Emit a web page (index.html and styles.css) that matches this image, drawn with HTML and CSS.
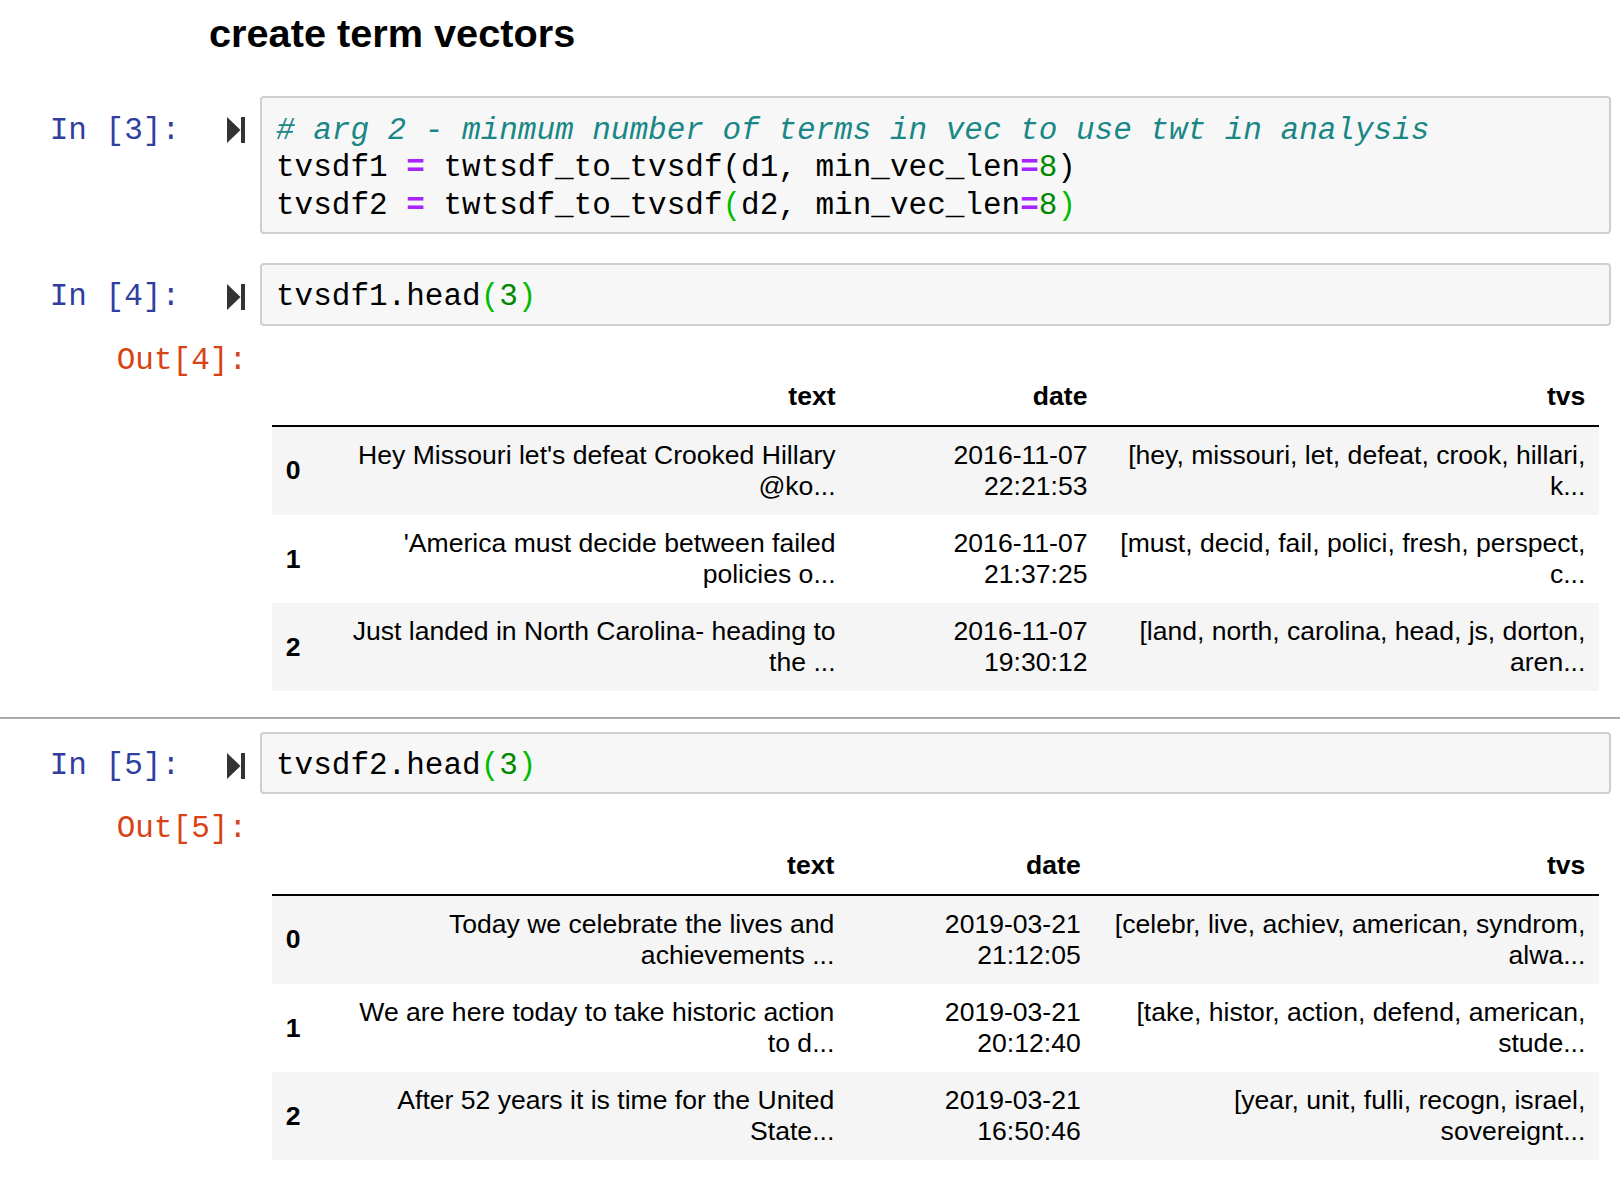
FILE: index.html
```html
<!DOCTYPE html>
<html>
<head>
<meta charset="utf-8">
<title>create term vectors</title>
<link rel="stylesheet" href="styles.css">
</head>
<body>
<div class="notebook">
  <div class="md-cell">
    <h2 class="md-title">create term vectors</h2>
  </div>

  <div class="cell cell-first">
    <div class="in-prompt">
      <span class="prompt-text in-color">In&nbsp;[3]:</span>
      <svg class="run-icon" viewBox="0 0 18 26" width="18" height="26" aria-hidden="true"><polygon points="0,0 13.5,13 0,26" fill="#333"/><rect x="14" y="0" width="4" height="26" fill="#333"/></svg>
    </div>
    <div class="input-box"><pre class="code"><span class="cm"># arg 2 - minmum number of terms in vec to use twt in analysis</span>
tvsdf1 <span class="op">=</span> twtsdf_to_tvsdf(d1, min_vec_len<span class="op">=</span><span class="num">8</span>)
tvsdf2 <span class="op">=</span> twtsdf_to_tvsdf<span class="br">(</span>d2, min_vec_len<span class="op">=</span><span class="num">8</span><span class="br">)</span></pre></div>
  </div>

  <div class="cell cell-next">
    <div class="in-prompt">
      <span class="prompt-text in-color">In&nbsp;[4]:</span>
      <svg class="run-icon" viewBox="0 0 18 26" width="18" height="26" aria-hidden="true"><polygon points="0,0 13.5,13 0,26" fill="#333"/><rect x="14" y="0" width="4" height="26" fill="#333"/></svg>
    </div>
    <div class="input-box"><pre class="code">tvsdf1.head<span class="br">(</span><span class="num">3</span><span class="br">)</span></pre></div>
  </div>
  <div class="output">
    <div class="out-prompt"><span class="prompt-text out-color">Out[4]:</span></div>
    <div class="output-sub">
      <table class="dataframe">
        <thead>
          <tr><th></th><th>text</th><th>date</th><th>tvs</th></tr>
        </thead>
        <tbody>
          <tr><th>0</th><td>Hey Missouri let's defeat Crooked Hillary @ko...</td><td>2016-11-07 22:21:53</td><td>[hey, missouri, let, defeat, crook, hillari, k...</td></tr>
          <tr><th>1</th><td>'America must decide between failed policies o...</td><td>2016-11-07 21:37:25</td><td>[must, decid, fail, polici, fresh, perspect, c...</td></tr>
          <tr><th>2</th><td>Just landed in North Carolina- heading to the ...</td><td>2016-11-07 19:30:12</td><td>[land, north, carolina, head, js, dorton, aren...</td></tr>
        </tbody>
      </table>
    </div>
  </div>

  <hr class="separator">

  <div class="cell cell-after-sep">
    <div class="in-prompt">
      <span class="prompt-text in-color">In&nbsp;[5]:</span>
      <svg class="run-icon" viewBox="0 0 18 26" width="18" height="26" aria-hidden="true"><polygon points="0,0 13.5,13 0,26" fill="#333"/><rect x="14" y="0" width="4" height="26" fill="#333"/></svg>
    </div>
    <div class="input-box"><pre class="code">tvsdf2.head<span class="br">(</span><span class="num">3</span><span class="br">)</span></pre></div>
  </div>
  <div class="output">
    <div class="out-prompt"><span class="prompt-text out-color">Out[5]:</span></div>
    <div class="output-sub">
      <table class="dataframe">
        <thead>
          <tr><th></th><th>text</th><th>date</th><th>tvs</th></tr>
        </thead>
        <tbody>
          <tr><th>0</th><td>Today we celebrate the lives and achievements ...</td><td>2019-03-21 21:12:05</td><td>[celebr, live, achiev, american, syndrom, alwa...</td></tr>
          <tr><th>1</th><td>We are here today to take historic action to&nbsp;d...</td><td>2019-03-21 20:12:40</td><td>[take, histor, action, defend, american, stude...</td></tr>
          <tr><th>2</th><td>After 52 years it is time for the United State...</td><td>2019-03-21 16:50:46</td><td>[year, unit, fulli, recogn, israel, sovereignt...</td></tr>
        </tbody>
      </table>
    </div>
  </div>
</div>
</body>
</html>
```

FILE: styles.css
```css
html, body {
  margin: 0;
  padding: 0;
  background: #ffffff;
}

body {
  font-family: "Liberation Sans", Arial, sans-serif;
  color: #000;
  overflow: hidden;
}

.notebook {
  width: 1620px;
  padding-top: 10px;
}

.md-cell {
  padding-left: 209px;
}

.md-title {
  margin: 0;
  font-family: "Liberation Sans", Arial, sans-serif;
  font-weight: bold;
  font-size: 39.7px;
  line-height: 46px;
  height: 46px;
}

.cell {
  display: flex;
  align-items: flex-start;
}

.cell-first {
  margin-top: 40px;
}

.cell-next {
  margin-top: 29px;
}

.cell-after-sep {
  margin-top: 12.5px;
}

.in-prompt {
  width: 247px;
  flex: none;
  display: flex;
  justify-content: flex-end;
  align-items: center;
  padding-top: 15.5px;
  height: 37.64px;
}

.prompt-text {
  font-family: "Liberation Mono", "Courier New", monospace;
  font-size: 31px;
  line-height: 37.64px;
  white-space: pre;
}

.in-color {
  color: #303F9F;
}

.out-color {
  color: #D84315;
}

.run-icon {
  display: block;
  margin-left: 47px;
  margin-right: 2px;
  flex: none;
}

.input-box {
  margin-left: 13px;
  width: 1351px;
  box-sizing: border-box;
  border: 2px solid #cfcfcf;
  border-radius: 4px;
  background: #f7f7f7;
  padding: 13.5px 14px 7.5px 14px;
}

.code {
  margin: 0;
  font-family: "Liberation Mono", "Courier New", monospace;
  font-size: 31px;
  line-height: 37.64px;
  color: #000;
  white-space: pre;
}

.cm {
  color: #1a8787;
  font-style: italic;
}

.op {
  color: #AA22FF;
  font-weight: bold;
}

.num {
  color: #008800;
}

.br {
  color: #00bb00;
}

.output {
  display: flex;
  align-items: flex-start;
  margin-top: 16px;
}

.out-prompt {
  width: 247px;
  flex: none;
  text-align: right;
}

.output-sub {
  margin-left: 13px;
  width: 1351px;
  box-sizing: border-box;
  padding: 0 12.4px;
}

.dataframe {
  margin-top: 26px;
  border-collapse: collapse;
  border-spacing: 0;
  border: none;
  color: #000;
  font-family: "Liberation Sans", Arial, sans-serif;
  font-size: 26.57px;
}

.dataframe th,
.dataframe td {
  text-align: right;
  vertical-align: middle;
  padding: 13.3px;
  line-height: 30.8px;
  white-space: normal;
  border: none;
}

.dataframe thead th {
  font-weight: bold;
  vertical-align: bottom;
  border-bottom: 2px solid #000;
  line-height: 30.6px;
}

.dataframe tbody th {
  font-weight: bold;
}

.dataframe tbody tr:nth-child(odd) {
  background: #f5f5f5;
}

.separator {
  margin: 26px 0 0 0;
  border: none;
  height: 2px;
  background: #ababab;
}
```
